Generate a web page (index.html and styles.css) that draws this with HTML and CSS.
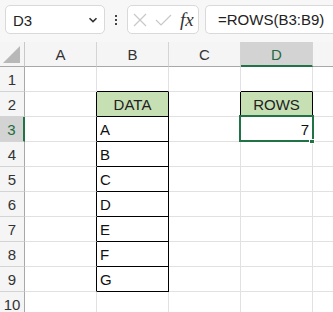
FILE: index.html
```html
<!DOCTYPE html>
<html>
<head>
<meta charset="utf-8">
<link rel="stylesheet" href="styles.css">
</head>
<body>
<div class="toolbar">
  <div class="namebox"><span class="ref">D3</span>
    <svg class="chev" width="10" height="6" viewBox="0 0 10 6"><path d="M1.5 1.2 L5 4.6 L8.5 1.2" fill="none" stroke="#333" stroke-width="1.6"/></svg>
  </div>
  <div class="kebab"><i></i><i></i><i></i></div>
  <div class="fxbox">
    <svg width="14" height="14" viewBox="0 0 14 14"><path d="M1 1 L13 13 M13 1 L1 13" stroke="#c8c8c8" stroke-width="1.2" fill="none"/></svg>
    <svg width="17" height="12" viewBox="0 0 17 12"><path d="M1 6 L6 11 L16 1" stroke="#c8c8c8" stroke-width="1.2" fill="none"/></svg>
    <span class="fx">fx</span>
  </div>
  <div class="formula">=ROWS(B3:B9)</div>
</div>
<div class="sheet">
  <div class="corner"><svg width="18" height="17" viewBox="0 0 18 17"><path d="M17 0 L17 17 L0 17 Z" fill="#b8b8b8"/></svg></div>
  <div class="ch">A</div><div class="ch">B</div><div class="ch">C</div><div class="ch sel">D</div><div class="ch last"></div>

  <div class="rh">1</div><div class="c"></div><div class="c bb"></div><div class="c"></div><div class="c bb"></div><div class="c last"></div>
  <div class="rh">2</div><div class="c br"></div><div class="c hd bx">DATA</div><div class="c br"></div><div class="c hd bx">ROWS</div><div class="c last"></div>
  <div class="rh sel">3</div><div class="c br"></div><div class="c bx">A</div><div class="c"></div><div class="c num active">7<span class="handle"></span></div><div class="c last"></div>
  <div class="rh">4</div><div class="c br"></div><div class="c bx">B</div><div class="c"></div><div class="c"></div><div class="c last"></div>
  <div class="rh">5</div><div class="c br"></div><div class="c bx">C</div><div class="c"></div><div class="c"></div><div class="c last"></div>
  <div class="rh">6</div><div class="c br"></div><div class="c bx">D</div><div class="c"></div><div class="c"></div><div class="c last"></div>
  <div class="rh">7</div><div class="c br"></div><div class="c bx">E</div><div class="c"></div><div class="c"></div><div class="c last"></div>
  <div class="rh">8</div><div class="c br"></div><div class="c bx">F</div><div class="c"></div><div class="c"></div><div class="c last"></div>
  <div class="rh">9</div><div class="c br"></div><div class="c bx">G</div><div class="c"></div><div class="c"></div><div class="c last"></div>
  <div class="rh">10</div><div class="c"></div><div class="c"></div><div class="c"></div><div class="c"></div><div class="c last"></div>
</div>
</body>
</html>
```
FILE: styles.css
```css
* { box-sizing: border-box; }
html, body { margin: 0; padding: 0; background: #fff; overflow: hidden; }
body { font-family: "Liberation Sans", Arial, sans-serif; width: 333px; height: 312px; }

.toolbar {
  height: 42px;
  background: #f7f7f7;
  display: flex;
  align-items: flex-start;
  padding-top: 5px;
  padding-left: 5px;
  white-space: nowrap;
}
.namebox {
  width: 100px; height: 29px;
  background: #fff;
  border: 1px solid #d9d9d9;
  border-radius: 5px;
  display: flex; align-items: center; justify-content: space-between;
  padding: 0 6px 0 7px;
  font-size: 15px; color: #222;
}
.ref { margin-top: 1px; }
.kebab {
  width: 22px; height: 29px;
  display: flex; flex-direction: column; align-items: center; justify-content: center; gap: 2px;
}
.kebab i { display: block; width: 2px; height: 2px; background: #444; }
.fxbox {
  width: 72px; height: 29px;
  background: #fff;
  border: 1px solid #d9d9d9;
  border-radius: 5px;
  display: flex; align-items: center;
  padding-left: 5px; gap: 8px;
}
.fx {
  font-family: "Liberation Serif", "DejaVu Serif", serif;
  font-style: italic; font-size: 19px; color: #333; margin-left: 0;
}
.formula {
  margin-left: 6px;
  height: 29px; flex: 1;
  background: #fff;
  border: 1px solid #d9d9d9;
  border-right: none;
  border-radius: 5px 0 0 5px;
  font-size: 15px; color: #222;
  padding-left: 12px;
  display: flex; align-items: center;
}

.sheet {
  display: grid;
  grid-template-columns: 25px 72px 72px 72px 72px 1fr;
  grid-template-rows: 25px repeat(10, 25px);
  font-size: 15px;
}
.corner {
  background: #f5f5f5;
  border-right: 1px solid #c8c8c8;
  border-bottom: 1px solid #a8a8a8;
  display: flex; align-items: flex-end; justify-content: flex-end;
  padding: 0 3px 3px 0;
}
.ch {
  background: #f5f5f5;
  border-right: 1px solid #d4d4d4;
  border-bottom: 1px solid #a8a8a8;
  display: flex; align-items: center; justify-content: center;
  color: #333; padding-top: 1px;
}
.ch.last { border-right: none; }
.ch.sel { background: #d3d3d3; border-bottom: 2px solid #217346; color: #1e6b41; }
.rh {
  background: #f5f5f5;
  border-right: 1px solid #a8a8a8;
  border-bottom: 1px solid #d4d4d4;
  display: flex; align-items: center; justify-content: center;
  color: #333;
}
.rh.sel { background: #d3d3d3; border-right: 2px solid #217346; color: #1e6b41; }
.c {
  border-right: 1px solid #e1e1e1;
  border-bottom: 1px solid #e1e1e1;
  display: flex; align-items: center;
  padding: 1px 3px 0 3px;
  color: #111;
}
.c.last { border-right: none; }
.c.bb { border-bottom-color: #000; }
.c.br { border-right-color: #000; }
.c.bx { border-right-color: #000; border-bottom-color: #000; }
.c.hd { background: #c6e0b4; justify-content: center; color: #222; }
.c.num { justify-content: flex-end; }
.c.active { position: relative; }
.c.active::after {
  content: "";
  position: absolute;
  left: -2px; top: -2px; right: -2px; bottom: -1px;
  border: 2px solid #217346;
  pointer-events: none;
}
.handle {
  position: absolute;
  right: -3px; bottom: -3px;
  width: 6px; height: 5px;
  background: #217346;
  border: 1px solid #fff;
  z-index: 2;
}
```
